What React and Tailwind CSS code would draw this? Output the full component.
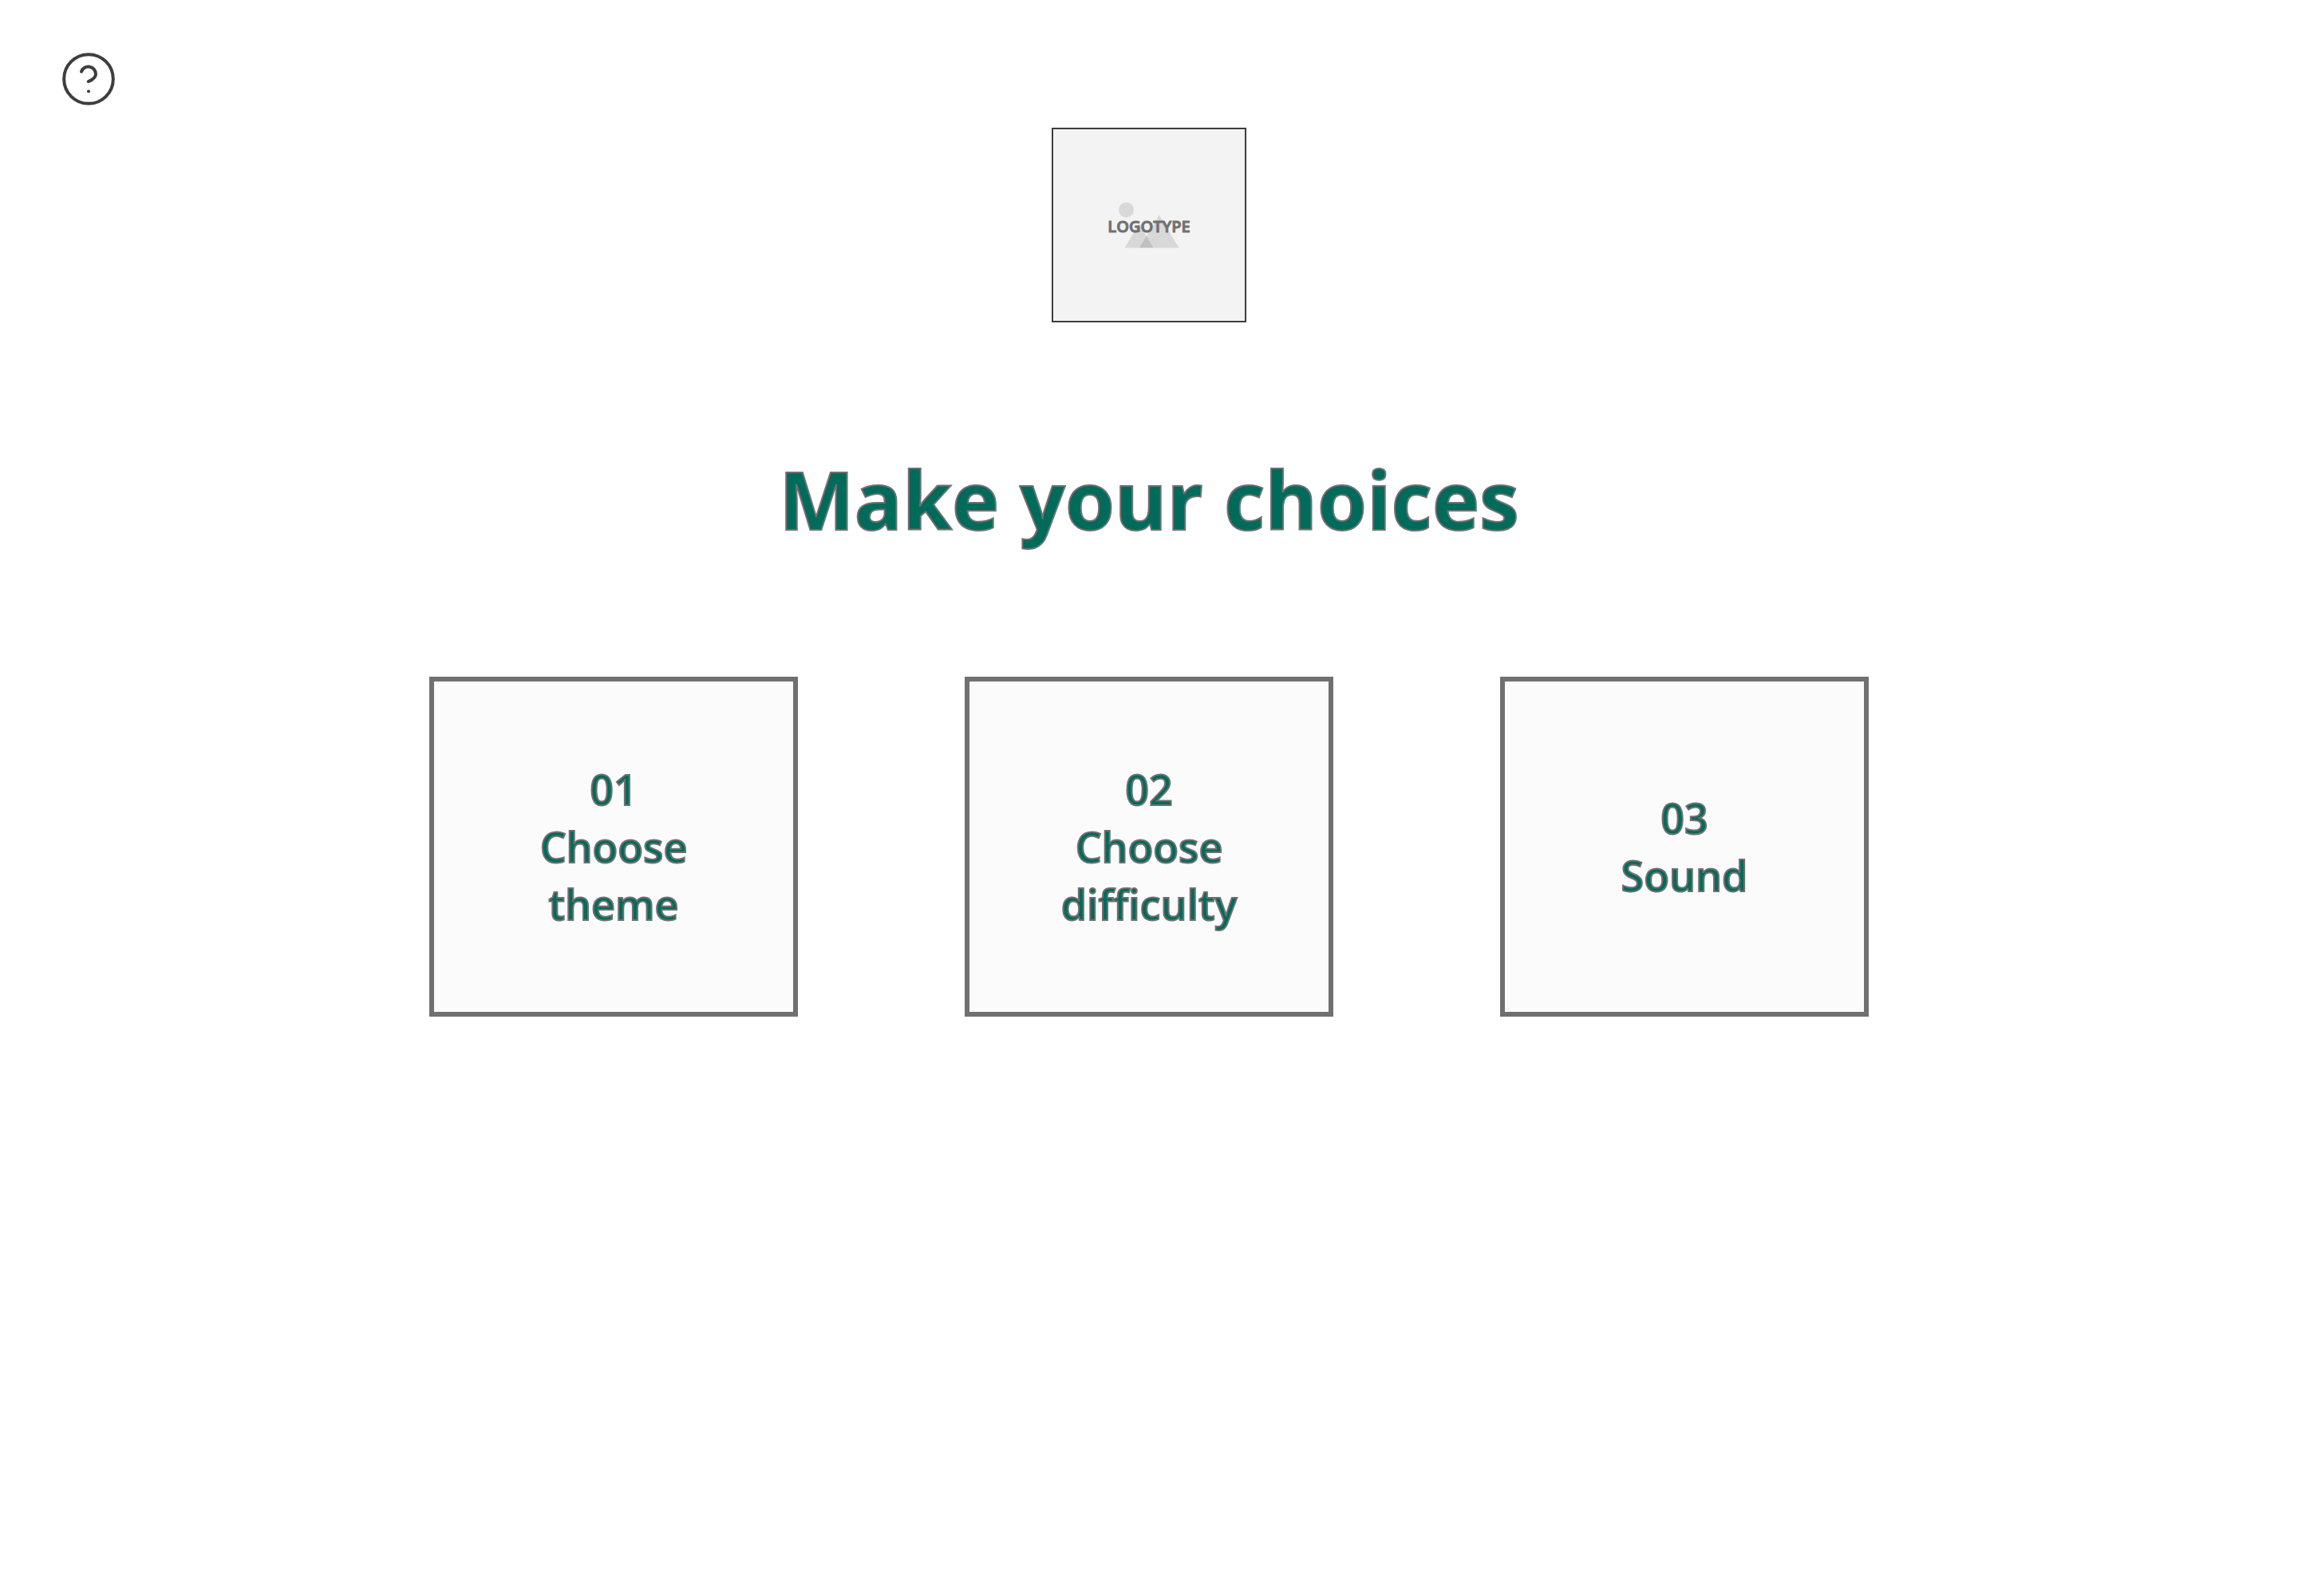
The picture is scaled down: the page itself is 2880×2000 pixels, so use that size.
const choices = [
  { number: "01", label: "Choose theme" },
  { number: "02", label: "Choose difficulty" },
  { number: "03", label: "Sound" },
];

function HelpIcon() {
  return (
    <svg
      viewBox="0 0 24 24"
      className="size-[74px]"
      fill="none"
      stroke="currentColor"
      strokeWidth="1.3"
      strokeLinecap="round"
      strokeLinejoin="round"
      aria-hidden="true"
    >
      <circle cx="12" cy="12" r="10" />
      <path d="M9.09 9a3 3 0 0 1 5.83 1c0 2-3 3-3 3" />
      <path d="M12 17h.01" />
    </svg>
  );
}

function Logo() {
  return (
    <div className="relative flex size-[244px] items-center justify-center border-2 border-[#3e3e3e] bg-[#f3f3f3] pt-1">
      <svg
        viewBox="0 0 240 240"
        className="absolute inset-0 size-full"
        fill="#000000"
        fillOpacity="0.11"
        aria-hidden="true"
      >
        <circle cx="91.5" cy="101" r="9.5" />
        <path d="M89.5 148.5L107.5 118.5L125.5 148.5Z" />
        <path d="M108 148.5L132.7 107.5L157.5 148.5Z" />
      </svg>
      <span className="relative text-[20px] leading-[30px] font-semibold text-[#707070] [-webkit-text-stroke:1px_#707070]">
        LOGOTYPE
      </span>
    </div>
  );
}

export default function App() {
  return (
    <div className="min-h-screen bg-white font-['Open_Sans','Noto_Sans',sans-serif]">
      <header className="grid grid-cols-[1fr_auto_1fr] items-start px-[74px] pt-[62px]">
        <button type="button" aria-label="Help" className="w-fit text-[#3e3e3e]">
          <HelpIcon />
        </button>
        <div className="pt-[98px]">
          <Logo />
        </div>
      </header>
      <main className="flex flex-col items-center px-8 pt-[153px]">
        <h1 className="text-center text-[100px] leading-[136px] font-bold text-[#006b5b] [-webkit-text-stroke:2px_#707070]">
          Make your choices
        </h1>
        <div className="mt-[155px] flex w-full max-w-[1804px] flex-wrap justify-between gap-y-12">
          {choices.map(({ number, label }) => (
            <button
              key={number}
              type="button"
              className="flex h-[426px] w-[462px] flex-col items-center justify-center border-[6px] border-[#707070] bg-[#fbfbfb] px-24 text-center text-[52px] leading-[72px] font-semibold text-[#006b5b] [-webkit-text-stroke:2px_#707070]"
            >
              <span>{number}</span>
              <span>{label}</span>
            </button>
          ))}
        </div>
      </main>
    </div>
  );
}
